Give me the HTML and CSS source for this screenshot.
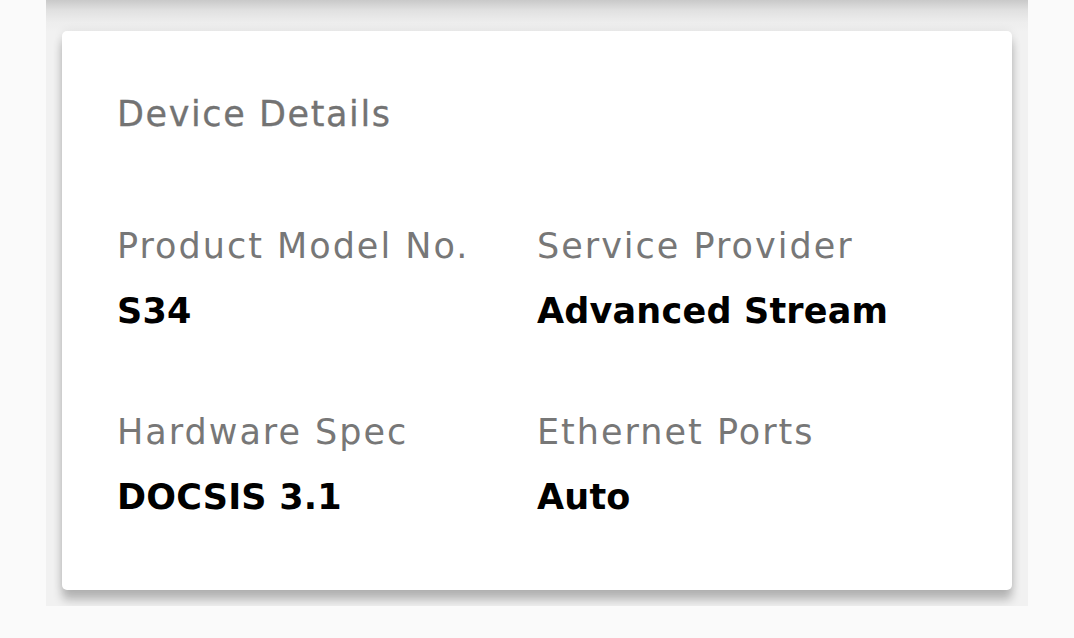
FILE: index.html
```html
<!DOCTYPE html>
<html lang="en">
<head>
<meta charset="utf-8">
<title>Device Details</title>
<link rel="stylesheet" href="styles.css">
</head>
<body>
<div class="band">
  <section class="card">
    <h2 class="card-title">Device Details</h2>
    <div class="details">
      <div class="item">
        <div class="label">Product Model No.</div>
        <div class="value">S34</div>
      </div>
      <div class="item">
        <div class="label">Service Provider</div>
        <div class="value">Advanced Stream</div>
      </div>
      <div class="item">
        <div class="label">Hardware Spec</div>
        <div class="value">DOCSIS 3.1</div>
      </div>
      <div class="item">
        <div class="label">Ethernet Ports</div>
        <div class="value">Auto</div>
      </div>
    </div>
  </section>
</div>
</body>
</html>
```
FILE: styles.css
```css
html, body {
  margin: 0;
  padding: 0;
}
body {
  background: #fafafa;
  font-family: "DejaVu Sans", "Noto Sans", sans-serif;
  width: 1074px;
  height: 638px;
  overflow: hidden;
}
.band {
  margin: 0 46px;
  padding: 31px 16px 16px;
  background: linear-gradient(to bottom, #c9c9c9 0, #e0e0e0 10px, #ededed 22px, #f1f1f1 32px);
  overflow: hidden;
}
.card {
  background: #fff;
  border-radius: 5px;
  height: 559px;
  box-sizing: border-box;
  padding: 63px 55px 0;
  box-shadow: 0 10px 10px rgba(0, 0, 0, 0.24), 0 0 10px rgba(0, 0, 0, 0.08);
}
.card-title {
  margin: 0;
  font-size: 35px;
  font-weight: 400;
  letter-spacing: 1.6px;
  color: #737373;
  line-height: 40px;
  -webkit-text-stroke: 0.3px #737373;
}
.details {
  margin-top: 92px;
  display: grid;
  grid-template-columns: 1fr 1fr;
  row-gap: 81px;
}
.label {
  font-size: 35px;
  letter-spacing: 2px;
  color: #777;
  line-height: 40px;
}
.value {
  margin-top: 25px;
  font-size: 35px;
  font-weight: 700;
  letter-spacing: 0.2px;
  color: #000;
  line-height: 40px;
}
```
